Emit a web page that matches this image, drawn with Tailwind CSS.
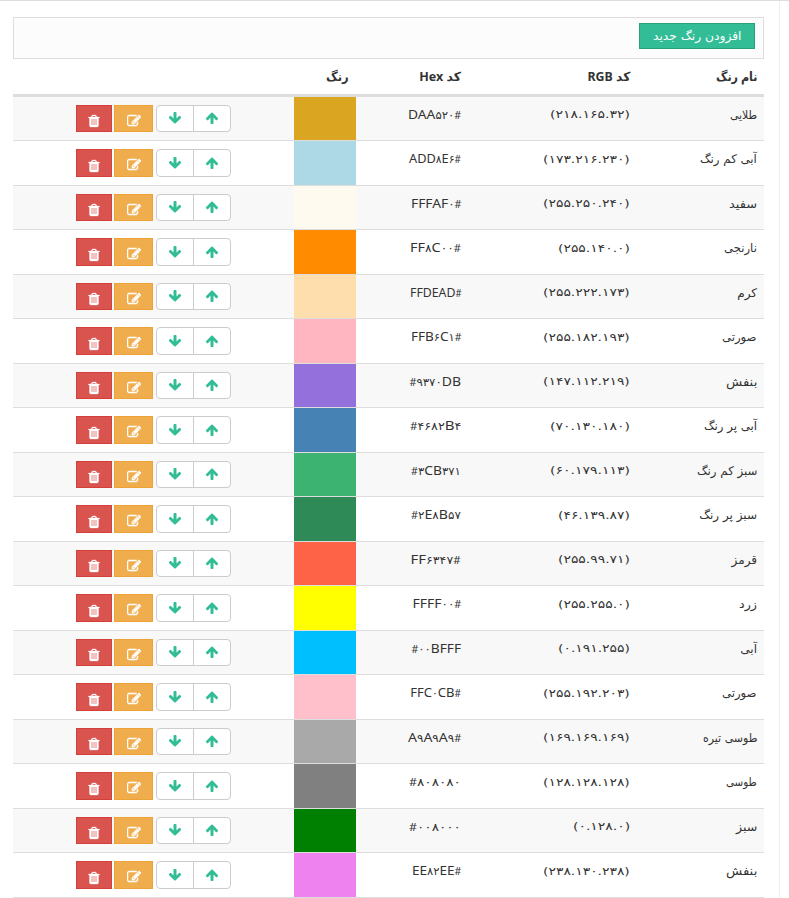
<!DOCTYPE html>
<html lang="fa" dir="rtl">
<head>
<meta charset="utf-8">
<title>رنگ</title>
<script src="https://cdn.jsdelivr.net/npm/@tailwindcss/browser@4"></script>
</head>
<body class="bg-white overflow-hidden h-[898px] text-[#333] text-[13px] font-['Noto_Sans','DejaVu_Sans',sans-serif]">
<svg class="hidden">
  <symbol id="up" viewBox="0 0 1792 1792"><path d="M1675 971q0 51-37 90l-75 75q-38 38-91 38-54 0-90-38l-294-293v704q0 52-37.500 84.500t-90.500 32.500h-128q-53 0-90.500-32.500t-37.500-84.500v-704l-294 293q-36 38-90 38t-90-38l-75-75q-38-38-38-90 0-53 38-91l651-651q35-37 90-37 54 0 91 37l651 651q37 39 37 91z"/></symbol>
  <symbol id="trash" viewBox="0 0 1792 1792"><path d="M704 1376v-704q0-14-9-23t-23-9h-64q-14 0-23 9t-9 23v704q0 14 9 23t23 9h64q14 0 23-9t9-23zm256 0v-704q0-14-9-23t-23-9h-64q-14 0-23 9t-9 23v704q0 14 9 23t23 9h64q14 0 23-9t9-23zm256 0v-704q0-14-9-23t-23-9h-64q-14 0-23 9t-9 23v704q0 14 9 23t23 9h64q14 0 23-9t9-23zm-544-992h448l-48-117q-7-9-17-11h-317q-10 2-17 11zm928 32v64q0 14-9 23t-23 9h-96v948q0 83-47 143.500t-113 60.500h-832q-66 0-113-58.500t-47-141.500v-952h-96q-14 0-23-9t-9-23v-64q0-14 9-23t23-9h309l70-167q15-37 54-63t79-26h320q40 0 79 26t54 63l70 167h309q14 0 23 9t9 23z"/></symbol>
  <symbol id="edit" viewBox="0 0 1792 1792"><path d="M888 1184l116-116-152-152-116 116v56h96v96h56zm440-720q-16-16-33 1l-350 350q-17 17-1 33t33-1l350-350q17-17 1-33zm80 594v190q0 119-84.500 203.500t-203.500 84.500h-832q-119 0-203.500-84.500t-84.500-203.500v-832q0-119 84.500-203.500t203.500-84.500h832q63 0 117 25 15 7 18 23 3 17-9 29l-49 49q-14 14-32 8-23-6-45-6h-832q-66 0-113 47t-47 113v832q0 66 47 113t113 47h832q66 0 113-47t47-113v-126q0-13 9-22l64-64q15-15 35-7t20 29zm-96-738l288 288-672 672h-288v-288zm444 132l-92 92-288-288 92-92q28-28 68-28t68 28l152 152q28 28 28 68t-28 68z"/></symbol>
</svg>
<div class="flex h-full border-t border-[#ddd]">
  <div class="w-[10px] shrink-0 border-l border-[#eee]"></div>
  <main class="flex-1 pr-[15px] pl-[13px] pt-4">
    <div class="h-[42px] border border-[#ddd] bg-[#fcfcfc] pt-[5px] pr-2">
      <button class="flex h-[26px] w-[116px] items-center justify-center border border-[#2a9f7c] bg-[#32bd97] text-white text-[12px]"><span data-w="89" class="inline-block origin-center whitespace-nowrap leading-4 font-['DejaVu_Sans']">افزودن رنگ جدید</span></button>
    </div>
    <div class="grid h-[37.5px] grid-cols-[126px_169px_113px_62px_1fr] border-b-[3px] border-[#ddd] pt-[9px] text-[12.5px] font-bold leading-[18px]">
      <div class="pr-[7px]"><span data-w="42" class="inline-block origin-right whitespace-nowrap">نام رنگ</span></div>
      <div class="pr-[8px]"><span data-w="42.500" class="inline-block origin-right whitespace-nowrap">کد RGB</span></div>
      <div class="pr-[8px]"><span data-w="42" class="inline-block origin-right whitespace-nowrap">کد Hex</span></div>
      <div class="pr-[7px]"><span data-w="23" class="inline-block origin-right whitespace-nowrap">رنگ</span></div>
    </div>
    <div id="rows"></div>
  </main>
</div>
<script>
const colors = [
  ['طلایی',27,'218.165.32',80,'DAA520',53],
  ['آبی کم رنگ',57,'173.216.230',87,'ADD8E6',52],
  ['سفید',28,'255.250.240',87,'FFFAF0',50],
  ['نارنجی',33,'255.140.0',72,'FF8C00',51],
  ['کرم',20,'255.222.173',87,'FFDEAD',51],
  ['صورتی',35,'255.182.193',87,'FFB6C1',50],
  ['بنفش',31,'147.112.219',87,'9370DB',51.5],
  ['آبی پر رنگ',53,'70.130.180',80,'4682B4',51],
  ['سبز کم رنگ',61,'60.179.113',80,'3CB371',50],
  ['سبز پر رنگ',58,'46.139.87',72,'2E8B57',50],
  ['قرمز',25,'255.99.71',72,'FF6347',50.5],
  ['زرد',18,'255.255.0',72,'FFFF00',48.5],
  ['آبی',17,'0.191.255',72,'00BFFF',49.5],
  ['صورتی',35,'255.192.203',87,'FFC0CB',51],
  ['طوسی تیره',55,'169.169.169',87,'A9A9A9',53],
  ['طوسی',31,'128.128.128',87,'808080',52],
  ['سبز',21,'0.128.0',57,'008000',52],
  ['بنفش',31,'238.130.238',87,'EE82EE',49],
];
const fa = s => s.replace(/\d/g, d => '۰۱۲۳۴۵۶۷۸۹'[d]);
document.getElementById('rows').innerHTML = colors.map(([name, nw, rgb, rw, hex, hw], i) => `
  <div class="grid h-[44.5px] grid-cols-[126px_169px_113px_62px_1fr] border-b border-[#ddd] ${i % 2 ? 'bg-white' : 'bg-[#f8f8f8]'}">
    <div class="pr-[7px] pt-[9px] leading-[18px] text-[12px] font-['DejaVu_Sans']"><span data-w="${nw}" class="inline-block origin-right whitespace-nowrap">${name}</span></div>
    <div class="pr-[8px] pt-[9.5px] leading-[18px] text-[11px] font-['DejaVu_Sans']"><span dir="ltr" data-w="${rw}" class="inline-block origin-right whitespace-nowrap">(${fa(rgb)})</span></div>
    <div class="pr-[8px] pt-[8px] leading-[18px] text-[13px]"><span data-w="${hw}" class="inline-block origin-right whitespace-nowrap"><span class="text-[10px]">#</span>${hex.replace(/\d+/g, d => `<span class="text-[11px] font-['DejaVu_Sans']">${fa(d)}</span>`)}</span></div>
    <div style="background:#${hex}"></div>
    <div class="flex items-start pr-[63px] pt-[8px]">
      <div class="flex h-[27.5px] w-[75px] rounded-[4px] border border-[#ccc] bg-white text-[#32bd97]">
        <div class="flex w-[37px] items-center justify-center border-l border-[#ccc]"><svg class="size-[14px] fill-current"><use href="#up"/></svg></div>
        <div class="flex flex-1 items-center justify-center"><svg class="size-[14px] rotate-180 fill-current"><use href="#up"/></svg></div>
      </div>
      <div class="mr-[3px] flex h-[27.5px] w-[39px] items-center justify-center border border-[#eea236] bg-[#f0ad4e] pt-[5px] text-white"><svg class="size-[14px] fill-current stroke-current [stroke-width:70]"><use href="#edit"/></svg></div>
      <div class="mr-[2px] flex h-[27.5px] w-[36px] items-center justify-center border border-[#d43f3a] bg-[#d9534f] pt-[6px] text-white"><svg class="size-[14px] fill-current stroke-current [stroke-width:40]"><use href="#trash"/></svg></div>
    </div>
  </div>`).join('');
const fit = new ResizeObserver(entries => entries.forEach(({ target }) => {
  target.style.transform = `scaleX(${target.dataset.w / target.offsetWidth})`;
}));
document.querySelectorAll('[data-w]').forEach(el => fit.observe(el));
</script>
</body>
</html>
